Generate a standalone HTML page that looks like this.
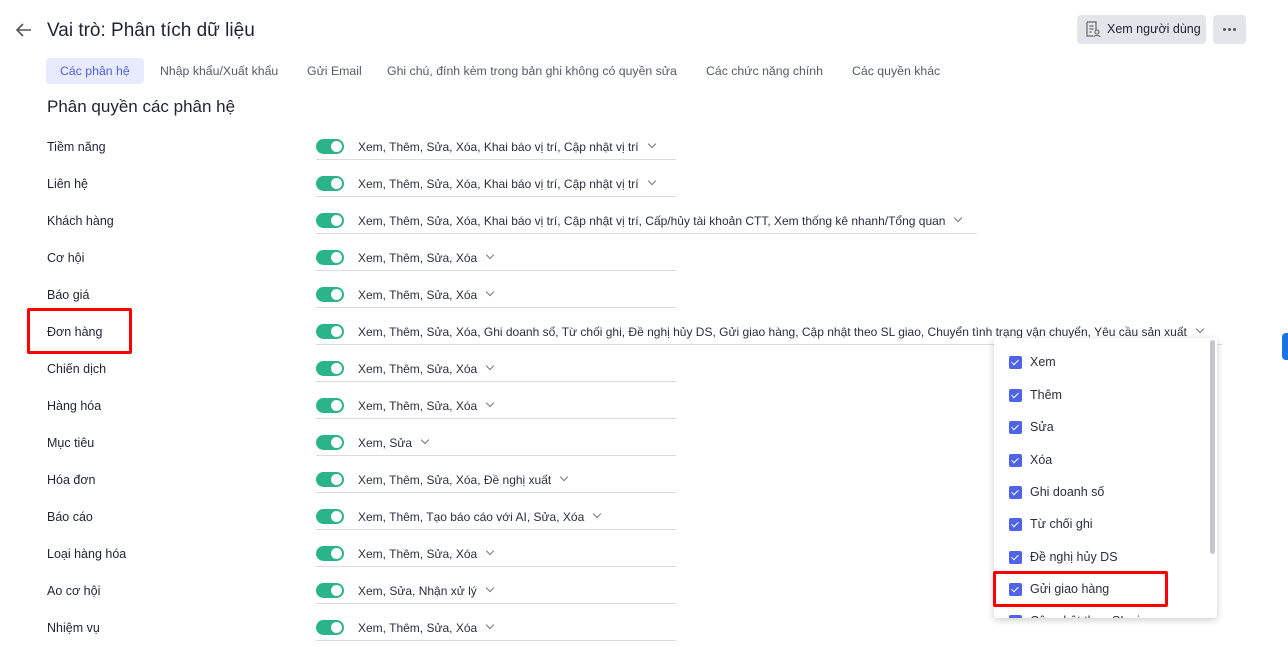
<!DOCTYPE html>
<html><head><meta charset="utf-8">
<style>
*{margin:0;padding:0;box-sizing:border-box}
body{width:1288px;height:647px;overflow:hidden;background:#fff;font-family:"Liberation Sans",sans-serif;color:#1f2430;position:relative}
.abs{position:absolute}
.title{left:47px;top:20px;font-size:19px;color:#1f2430}
.back{left:14px;top:20px}
.tab{top:58px;height:26px;line-height:26px;font-size:12.3px;color:#555b66;padding:0 14px}
.tab.on{background:#e8eafd;color:#4f5ee0;border-radius:4px}
.h2{left:47px;top:97px;font-size:17px}
.lbl{left:47px;font-size:12.5px;color:#1f2430}
.tg{left:316px;width:28px;height:15px;background:#2bb38a;border-radius:8px}
.tg::after{content:"";position:absolute;right:2px;top:2px;width:11px;height:11px;border-radius:50%;background:#fff}
.val{left:358px;font-size:12px;color:#2a2f3a;white-space:nowrap}
.chev{display:inline-block;width:6px;height:6px;border-right:1.3px solid #777;border-bottom:1.3px solid #777;transform:rotate(45deg);margin-left:10px;position:relative;top:-4px}
.ul{left:316px;height:1px;background:#d9dbe0}
.btn{background:#e4e5ea;border-radius:4px}
.dd{left:994px;top:338px;width:223px;height:280px;background:#fff;box-shadow:0 2px 8px rgba(0,0,0,.2);border-radius:3px;overflow:hidden}
.it{position:absolute;left:15px;font-size:12.5px;color:#2a2f3a}
.cb{position:absolute;left:0;top:1px;width:13px;height:13px;background:#4f63e7;border-radius:2px}
.cb::after{content:"";position:absolute;left:4px;top:2px;width:3px;height:6px;border-right:1.3px solid #fff;border-bottom:1.3px solid #fff;transform:rotate(45deg)}
.it span{position:absolute;left:21px;top:0;white-space:nowrap}
.red{border:3px solid #f00;border-radius:2px}
</style></head><body>
<svg class="abs back" width="20" height="20" viewBox="0 0 20 20"><path d="M17 10H3M9 4L3 10L9 16" stroke="#555" stroke-width="1.6" fill="none"/></svg>
<div class="abs title">Vai trò: Phân tích dữ liệu</div>
<div class="abs btn" style="left:1077px;top:15px;width:129px;height:29px"></div>
<svg class="abs" style="left:1085px;top:21px" width="16" height="17" viewBox="0 0 16 17"><path d="M2 1h9v8M2 1v14h6M4.5 5h4M4.5 8h4M4.5 11h2" stroke="#666" stroke-width="1.2" fill="none"/><circle cx="12" cy="11" r="2" stroke="#666" stroke-width="1.1" fill="none"/><path d="M9 16c0-2 6-2 6 0" stroke="#666" stroke-width="1.1" fill="none"/></svg>
<div class="abs" style="left:1107px;top:22px;font-size:12.5px;color:#1f2430">Xem người dùng</div>
<div class="abs btn" style="left:1213px;top:15px;width:33px;height:29px"></div>
<div class="abs" style="left:1223px;top:28px;width:3px;height:3px;border-radius:50%;background:#555;box-shadow:5px 0 0 #555,10px 0 0 #555"></div>

<div class="abs tab on" style="left:46px">Các phân hệ</div>
<div class="abs tab" style="left:146px">Nhập khẩu/Xuất khẩu</div>
<div class="abs tab" style="left:293px">Gửi Email</div>
<div class="abs tab" style="left:373px">Ghi chú, đính kèm trong bản ghi không có quyền sửa</div>
<div class="abs tab" style="left:692px">Các chức năng chính</div>
<div class="abs tab" style="left:838px">Các quyền khác</div>

<div class="abs h2">Phân quyền các phân hệ</div>

<div id="rows"></div>
<script>
var rows=[["Tiềm năng","Xem, Thêm, Sửa, Xóa, Khai báo vị trí, Cập nhật vị trí",676],
["Liên hệ","Xem, Thêm, Sửa, Xóa, Khai báo vị trí, Cập nhật vị trí",676],
["Khách hàng","Xem, Thêm, Sửa, Xóa, Khai báo vị trí, Cập nhật vị trí, Cấp/hủy tài khoản CTT, Xem thống kê nhanh/Tổng quan",977],
["Cơ hội","Xem, Thêm, Sửa, Xóa",676],
["Báo giá","Xem, Thêm, Sửa, Xóa",676],
["Đơn hàng","Xem, Thêm, Sửa, Xóa, Ghi doanh số, Từ chối ghi, Đề nghị hủy DS, Gửi giao hàng, Cập nhật theo SL giao, Chuyển tình trạng vận chuyển, Yêu cầu sản xuất",1222],
["Chiến dịch","Xem, Thêm, Sửa, Xóa",676],
["Hàng hóa","Xem, Thêm, Sửa, Xóa",676],
["Mục tiêu","Xem, Sửa",676],
["Hóa đơn","Xem, Thêm, Sửa, Xóa, Đề nghị xuất",676],
["Báo cáo","Xem, Thêm, Tạo báo cáo với AI, Sửa, Xóa",676],
["Loại hàng hóa","Xem, Thêm, Sửa, Xóa",676],
["Ao cơ hội","Xem, Sửa, Nhận xử lý",676],
["Nhiệm vụ","Xem, Thêm, Sửa, Xóa",676]];
var h="";
rows.forEach(function(r,i){var c=147+37*i;
h+='<div class="abs lbl" style="top:'+(c-7)+'px">'+r[0]+'</div>';
h+='<div class="abs tg" style="top:'+(c-8)+'px"></div>';
h+='<div class="abs val" style="top:'+(c-7)+'px">'+r[1]+'<span class="chev"></span></div>';
h+='<div class="abs ul" style="top:'+(c+12)+'px;width:'+(r[2]-316)+'px"></div>';});
document.getElementById("rows").innerHTML=h;
</script>

<div class="abs red" style="left:27px;top:308px;width:105px;height:46px"></div>

<div class="abs dd">
<div style="position:absolute;left:216px;top:2px;width:5px;height:214px;background:#c4c6cc;border-radius:3px"></div>
<div class="it" style="top:17px"><div class="cb"></div><span>Xem</span></div>
<div class="it" style="top:50px"><div class="cb"></div><span>Thêm</span></div>
<div class="it" style="top:82px"><div class="cb"></div><span>Sửa</span></div>
<div class="it" style="top:115px"><div class="cb"></div><span>Xóa</span></div>
<div class="it" style="top:147px"><div class="cb"></div><span>Ghi doanh số</span></div>
<div class="it" style="top:179px"><div class="cb"></div><span>Từ chối ghi</span></div>
<div class="it" style="top:212px"><div class="cb"></div><span>Đề nghị hủy DS</span></div>
<div class="it" style="top:244px"><div class="cb"></div><span>Gửi giao hàng</span></div>
<div class="it" style="top:276px"><div class="cb"></div><span>Cập nhật theo SL giao</span></div>
</div>
<div class="abs red" style="left:993px;top:571px;width:175px;height:36px"></div>
<div class="abs" style="left:1282px;top:333px;width:10px;height:27px;background:#1a73e8;border-radius:4px"></div>
</body></html>
